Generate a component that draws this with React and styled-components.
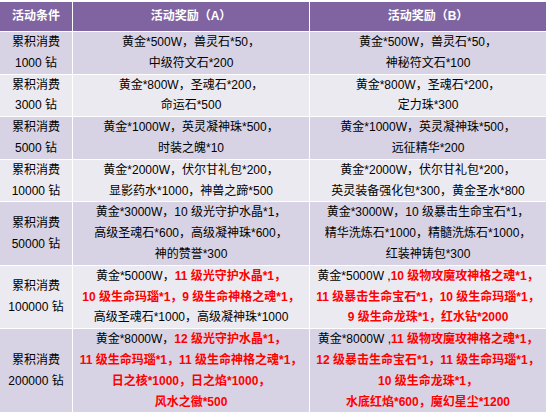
import React from 'react';
import styled, { createGlobalStyle } from 'styled-components';

const GlobalStyle = createGlobalStyle`
  html, body {
    margin: 0;
    padding: 0;
    background: #ffffff;
  }
  body {
    font-family: 'Liberation Sans', 'Noto Sans CJK SC', sans-serif;
    font-size: 12px;
    color: #000000;
  }
`;

const Page = styled.div`
  width: 549px;
  height: 416px;
  overflow: hidden;
  padding-top: 2px;
  box-sizing: border-box;
`;

const Table = styled.div`
  display: grid;
  grid-template-columns: 72px 236px 236px;
  gap: 1px;
  width: 546px;
  background: #ffffff;
`;

const HeadCell = styled.div`
  height: 29px;
  line-height: 29px;
  background: #8064a2;
  color: #ffffff;
  font-weight: 700;
  text-align: center;
  white-space: nowrap;
`;

const Cell = styled.div`
  display: flex;
  flex-direction: column;
  justify-content: center;
  background: ${(p) => (p.$alt ? '#eceaf1' : '#d7d3e4')};
  line-height: 20.8px;
  text-align: center;
  white-space: nowrap;
  overflow: hidden;
`;

const Hot = styled.span`
  color: #ff0000;
  font-weight: 700;
`;

const rows = [
  {
    need: '1000 钻',
    a: [['黄金*500W，兽灵石*50，'], ['中级符文石*200']],
    b: [['黄金*500W，兽灵石*50，'], ['神秘符文石*100']],
  },
  {
    need: '3000 钻',
    a: [['黄金*800W，圣魂石*200，'], ['命运石*500']],
    b: [['黄金*800W，圣魂石*200，'], ['定力珠*300']],
  },
  {
    need: '5000 钻',
    a: [['黄金*1000W，英灵凝神珠*500，'], ['时装之魄*10']],
    b: [['黄金*1000W，英灵凝神珠*500，'], ['远征精华*200']],
  },
  {
    need: '10000 钻',
    a: [['黄金*2000W，伏尔甘礼包*200，'], ['显影药水*1000，神兽之蹄*500']],
    b: [['黄金*2000W，伏尔甘礼包*200，'], ['英灵装备强化包*300，黄金圣水*800']],
  },
  {
    need: '50000 钻',
    a: [
      ['黄金*3000W，10 级光守护水晶*1，'],
      ['高级圣魂石*600，高级凝神珠*600，'],
      ['神的赞誉*300'],
    ],
    b: [
      ['黄金*3000W，10 级暴击生命宝石*1，'],
      ['精华洗炼石*1000，精髓洗炼石*1000，'],
      ['红装神铸包*300'],
    ],
  },
  {
    need: '100000 钻',
    a: [
      ['黄金*5000W，', '11 级光守护水晶*1，'],
      ['', '10 级生命玛瑙*1，9 级生命神格之魂*1，'],
      ['高级圣魂石*1000，高级凝神珠*1000'],
    ],
    b: [
      ['黄金*5000W ,', '10 级物攻魔攻神格之魂*1，'],
      ['', '11 级暴击生命宝石*1，10 级生命玛瑙*1，'],
      ['', '9 级生命龙珠*1，红水钻*2000'],
    ],
  },
  {
    need: '200000 钻',
    a: [
      ['黄金*8000W，', '12 级光守护水晶*1，'],
      ['', '11 级生命玛瑙*1，11 级生命神格之魂*1，'],
      ['', '日之核*1000，日之焰*1000，'],
      ['', '风水之徽*500'],
    ],
    b: [
      ['黄金*8000W ,', '11 级物攻魔攻神格之魂*1，'],
      ['', '12 级暴击生命宝石*1，11 级生命玛瑙*1，'],
      ['', '10 级生命龙珠*1，'],
      ['', '水底红焰*600，魔幻星尘*1200'],
    ],
  },
];

const Lines = ({ lines }) =>
  lines.map(([plain, hot], i) => (
    <div key={i}>
      {plain}
      {hot ? <Hot>{hot}</Hot> : null}
    </div>
  ));

const App = () => (
  <>
    <GlobalStyle />
    <Page>
      <Table>
        <HeadCell>活动条件</HeadCell>
        <HeadCell>活动奖励（A）</HeadCell>
        <HeadCell>活动奖励（B）</HeadCell>
        {rows.map((row, i) => (
          <React.Fragment key={row.need}>
            <Cell $alt={i % 2 === 1}>
              <div>累积消费</div>
              <div>{row.need}</div>
            </Cell>
            <Cell $alt={i % 2 === 1}>
              <Lines lines={row.a} />
            </Cell>
            <Cell $alt={i % 2 === 1}>
              <Lines lines={row.b} />
            </Cell>
          </React.Fragment>
        ))}
      </Table>
    </Page>
  </>
);

export default App;
